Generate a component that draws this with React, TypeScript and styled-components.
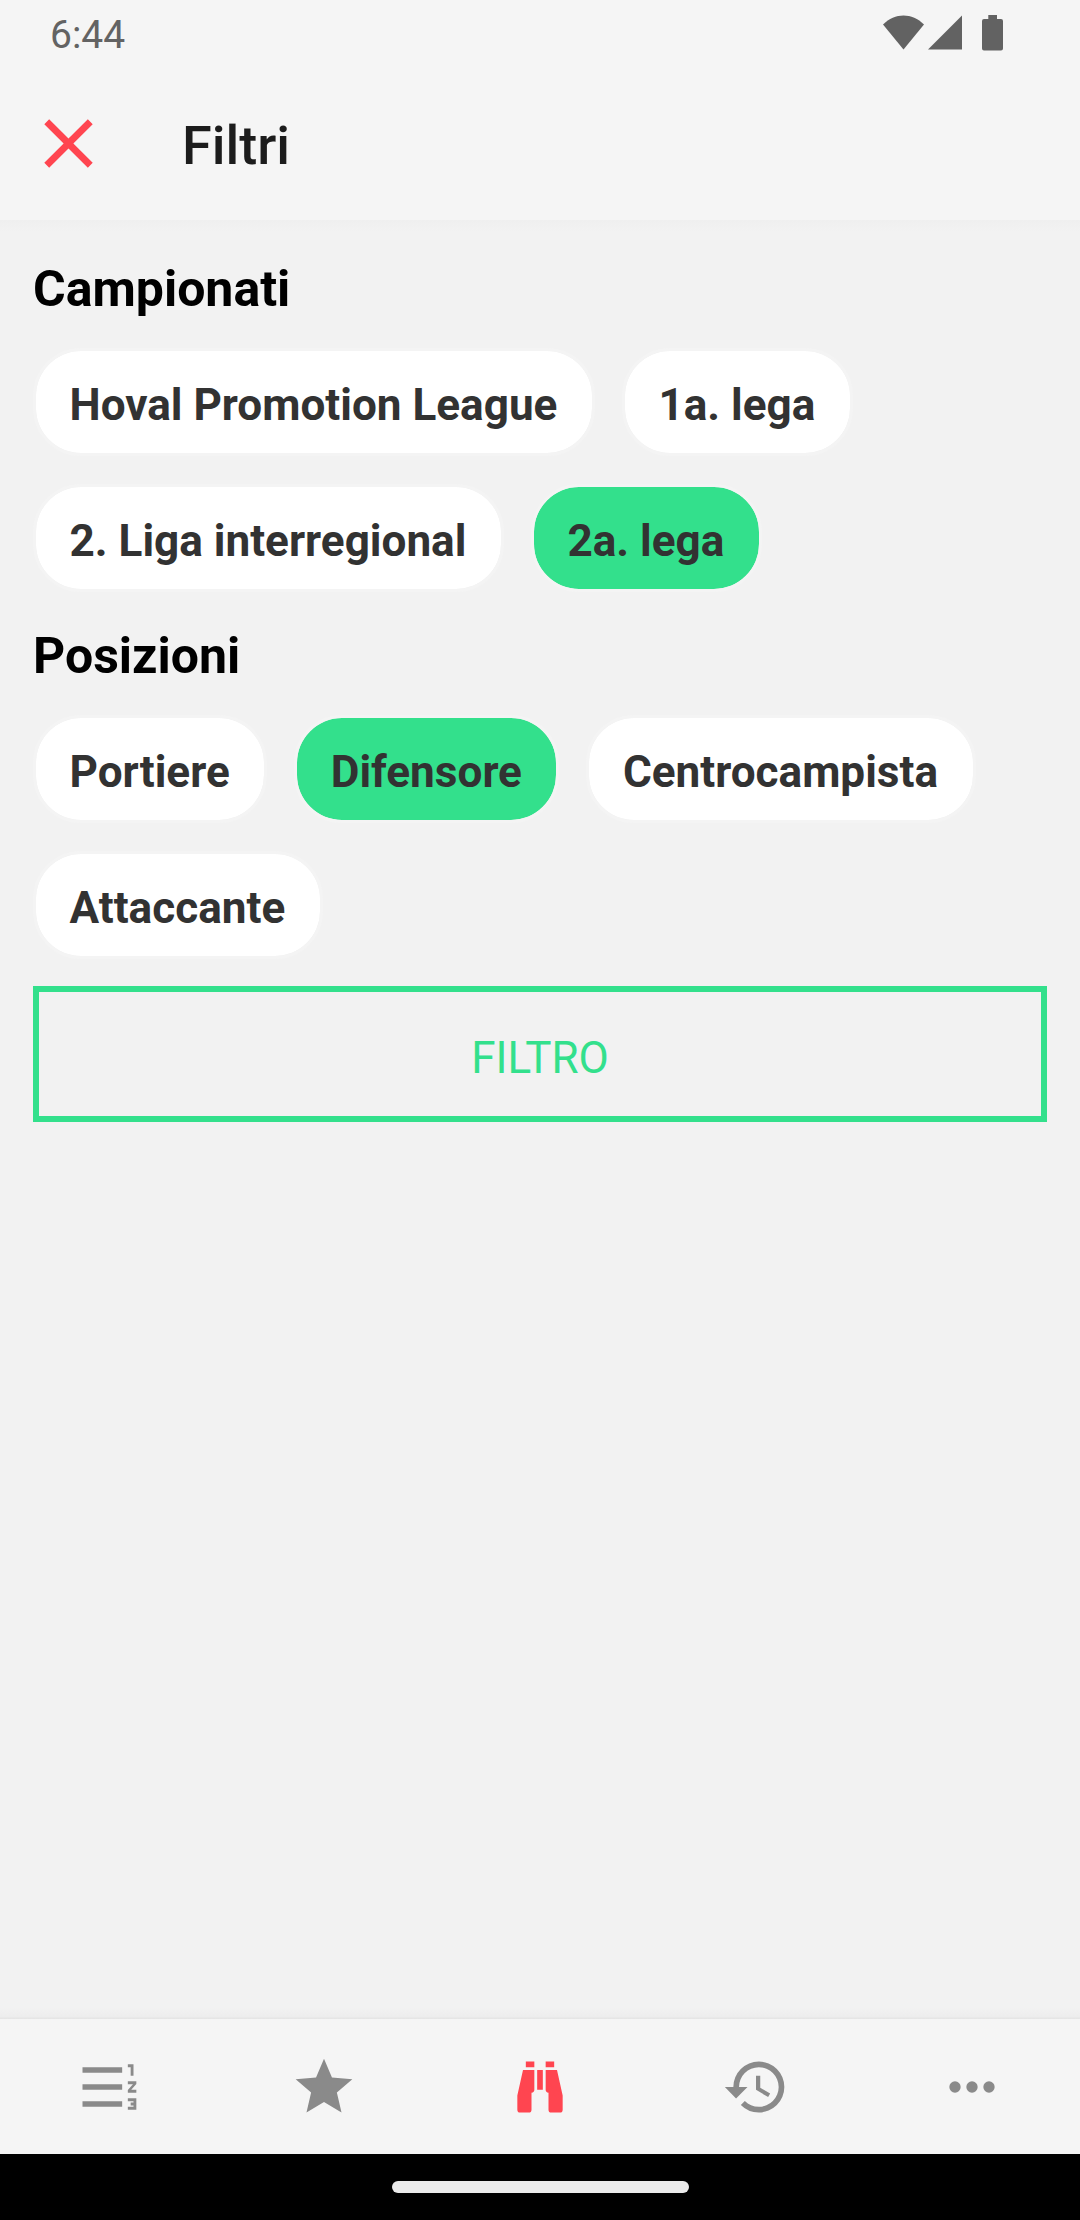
import React from "react";
import styled, { createGlobalStyle } from "styled-components";

const GlobalStyle = createGlobalStyle`
  * { box-sizing: border-box; }
  html, body { margin: 0; padding: 0; background: #f2f2f2; }
  body { font-family: Roboto, "Liberation Sans", sans-serif; }
  button { font: inherit; border: 0; background: none; padding: 0; }
`;

const Screen = styled.div`
  width: 1080px;
  height: 2220px;
  display: flex;
  flex-direction: column;
  background: #f2f2f2;
  overflow: hidden;
`;

const StatusBar = styled.div`
  height: 66px;
  flex: none;
  display: flex;
  align-items: center;
  justify-content: space-between;
  padding: 0 77px 0 50px;
  background: #f5f5f5;
`;

const Clock = styled.span`
  font-size: 39px;
  line-height: 44px;
  padding-top: 4px;
  color: #636363;
`;

const StatusIcons = styled.svg`
  width: 120px;
  height: 36px;
`;

const Header = styled.header`
  height: 154px;
  flex: none;
  display: flex;
  align-items: center;
  gap: 72px;
  padding: 0 27px;
  background: #f5f5f5;
`;

const Title = styled.h1`
  margin: 0;
  padding-top: 5px;
  font-size: 54px;
  line-height: 64px;
  font-weight: 500;
  color: #1c1c1c;
`;

const HeaderShadow = styled.div`
  height: 12px;
  flex: none;
  background: linear-gradient(#efefef, #f2f2f2);
`;

const Content = styled.main`
  flex: 1;
  display: flex;
  flex-direction: column;
  padding: 27px 33px 0;
`;

const Section = styled.section`
  display: flex;
  flex-direction: column;

  & + & {
    margin-top: 34px;
  }
`;

const SectionTitle = styled.h2`
  margin: 0 0 29px;
  font-size: 50px;
  line-height: 60px;
  font-weight: 700;
  color: #000;
`;

const Chips = styled.div`
  display: flex;
  flex-wrap: wrap;
  gap: 28px 27px;
`;

const Chip = styled.button<{ $selected?: boolean }>`
  height: 108px;
  padding: 6px 34.5px 0 33.5px;
  border: 3px solid #f4f4f4;
  border-radius: 48px;
  background: ${(p) => (p.$selected ? "#33e08c" : "#fff")};
  background-clip: padding-box;
  font-size: 44.1px;
  line-height: 52px;
  font-weight: 700;
  color: #323232;
`;

const FilterButton = styled.button`
  height: 136px;
  margin-top: 27px;
  border: 6px solid #33e08c;
  padding-top: 7px;
  font-size: 44px;
  line-height: 52px;
  color: #33e08c;
`;

const TabShadow = styled.div`
  height: 12px;
  flex: none;
  background: linear-gradient(#f2f2f2, #ededed 80%, #e3e3e3);
`;

const TabBar = styled.nav`
  height: 135px;
  flex: none;
  display: flex;
  background: #f5f5f5;
`;

const Tab = styled.button<{ $active?: boolean }>`
  flex: 1;
  display: flex;
  align-items: center;
  justify-content: center;
  color: ${(p) => (p.$active ? "#ff4550" : "#8a8a8a")};
`;

const Icon = styled.svg<{ $size: number }>`
  width: ${(p) => p.$size}px;
  height: ${(p) => p.$size}px;
  flex: none;
  fill: currentColor;
`;

const CloseButton = styled.button`
  display: flex;
  color: #ff4550;
`;

const SystemNav = styled.div`
  height: 66px;
  flex: none;
  display: flex;
  align-items: center;
  justify-content: center;
  background: #000;
`;

const HomePill = styled.div`
  width: 297px;
  height: 12px;
  border-radius: 6px;
  background: #ebebeb;
`;

const closePath =
  "M19 6.41L17.59 5 12 10.59 6.41 5 5 6.41 10.59 12 5 17.59 6.41 19 12 13.41 17.59 19 19 17.59 13.41 12 19 6.41z";

const tabs = [
  {
    label: "Classifica",
    path: "M19 17h2v.5h-1v1h1v.5h-2v1h3v-4h-3v1zm1-9h1V4h-2v1h1v3zm-1 3h1.8L19 13.1v.9h3v-1h-1.8l1.8-2.1V10h-3v1zM3 5h14v2H3V5zm0 12h14v2H3v-2zm0-6h14v2H3v-2z",
  },
  {
    label: "Preferiti",
    path: "M12 17.27L18.18 21l-1.64-7.03L22 9.24l-7.19-.62L12 2 9.19 8.62 2 9.24l5.45 4.73L5.82 21 12 17.27z",
  },
  {
    label: "Cerca",
    active: true,
    path: "M11 6h2v7h-2V6M9 20a1 1 0 0 1-1 1H5a1 1 0 0 1-1-1v-5l2-9h4v7a1 1 0 0 1-1 1v6M10 5H7V3h3v2m5 15v-6a1 1 0 0 1-1-1V6h4l2 9v5a1 1 0 0 1-1 1h-3a1 1 0 0 1-1-1M14 5V3h3v2h-3z",
  },
  {
    label: "Cronologia",
    path: "M13.5 8H12v5l4.28 2.54.72-1.21-3.5-2.08V8M13 3a9 9 0 0 0-9 9H1l3.96 4.03L9 12H6a7 7 0 0 1 7-7 7 7 0 0 1 7 7 7 7 0 0 1-7 7c-1.93 0-3.68-.79-4.94-2.06l-1.42 1.42A8.9 8.9 0 0 0 13 21a9 9 0 0 0 9-9 9 9 0 0 0-9-9",
  },
  {
    label: "Altro",
    path: "M16 12a2 2 0 1 1 4 0 2 2 0 0 1-4 0m-6 0a2 2 0 1 1 4 0 2 2 0 0 1-4 0m-6 0a2 2 0 1 1 4 0 2 2 0 0 1-4 0z",
  },
];

const groups = [
  {
    title: "Campionati",
    options: ["Hoval Promotion League", "1a. lega", "2. Liga interregional", "2a. lega"],
    selected: "2a. lega",
  },
  {
    title: "Posizioni",
    options: ["Portiere", "Difensore", "Centrocampista", "Attaccante"],
    selected: "Difensore",
  },
];

export default function App() {
  return (
    <>
      <GlobalStyle />
      <Screen>
        <StatusBar>
          <Clock>6:44</Clock>
          <StatusIcons viewBox="883 15 120 36" fill="#626262">
            <path d="M883 24.5C895 12.5 912 12.5 924 24.5L903.5 49.5z" />
            <path d="M928 49.5L962 15.5v34z" />
            <path d="M988.3 15h8.7v4h4a2 2 0 0 1 2 2v27.5a2 2 0 0 1-2 2h-17a2 2 0 0 1-2-2V21a2 2 0 0 1 2-2h4.3z" />
          </StatusIcons>
        </StatusBar>
        <Header>
          <CloseButton aria-label="Chiudi">
            <Icon $size={83} viewBox="0 0 24 24">
              <path d={closePath} />
            </Icon>
          </CloseButton>
          <Title>Filtri</Title>
        </Header>
        <HeaderShadow />
        <Content>
          {groups.map((group) => (
            <Section key={group.title}>
              <SectionTitle>{group.title}</SectionTitle>
              <Chips>
                {group.options.map((option) => (
                  <Chip key={option} $selected={option === group.selected}>
                    {option}
                  </Chip>
                ))}
              </Chips>
            </Section>
          ))}
          <FilterButton>FILTRO</FilterButton>
        </Content>
        <TabShadow />
        <TabBar>
          {tabs.map((tab) => (
            <Tab key={tab.label} aria-label={tab.label} $active={tab.active}>
              <Icon $size={68} viewBox="0 0 24 24">
                <path d={tab.path} />
              </Icon>
            </Tab>
          ))}
        </TabBar>
        <SystemNav>
          <HomePill />
        </SystemNav>
      </Screen>
    </>
  );
}
